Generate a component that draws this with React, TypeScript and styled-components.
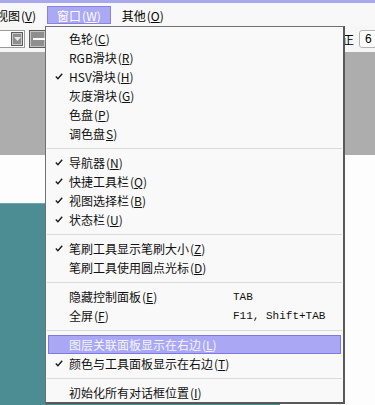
import styled, { createGlobalStyle } from "styled-components";

const GlobalStyle = createGlobalStyle`
  html, body {
    margin: 0;
    padding: 0;
    background: #ffffff;
    overflow: hidden;
  }
  body {
    font-family: "Noto Sans CJK SC", "Liberation Sans", sans-serif;
    font-size: 12px;
    color: #000;
  }
`;

type MenuItem = {
  text: string;
  mn: string;
  open?: string;
  checked?: boolean;
  hot?: boolean;
  shortcut?: string;
};

const sections: MenuItem[][] = [
  [
    { text: "色轮", mn: "C" },
    { text: "RGB滑块", mn: "R" },
    { text: "HSV滑块", mn: "H", checked: true },
    { text: "灰度滑块", mn: "G" },
    { text: "色盘", mn: "P" },
    { text: "调色盘", mn: "S", open: "" },
  ],
  [
    { text: "导航器", mn: "N", checked: true },
    { text: "快捷工具栏", mn: "Q", checked: true },
    { text: "视图选择栏", mn: "B", checked: true },
    { text: "状态栏", mn: "U", checked: true },
  ],
  [
    { text: "笔刷工具显示笔刷大小", mn: "Z", checked: true },
    { text: "笔刷工具使用圆点光标", mn: "D" },
  ],
  [
    { text: "隐藏控制面板", mn: "E", shortcut: "TAB" },
    { text: "全屏", mn: "F", shortcut: "F11, Shift+TAB" },
  ],
  [
    { text: "图层关联面板显示在右边", mn: "L", hot: true },
    { text: "颜色与工具面板显示在右边", mn: "T", checked: true },
  ],
  [{ text: "初始化所有对话框位置", mn: "I" }],
];

export default function App() {
  return (
    <>
      <GlobalStyle />
      <Window>
        <TitleStrip />
        <MenuBar>
          <MenuTitle>
            视图<Paren>(<Mn>V</Mn>)</Paren>
          </MenuTitle>
          <MenuTitle $active>
            窗口<Paren>(<Mn>W</Mn>)</Paren>
          </MenuTitle>
          <MenuTitle>
            其他<Paren>(<Mn>O</Mn>)</Paren>
          </MenuTitle>
        </MenuBar>
        <Toolbar>
          <ToolGroup>
            <ComboField>
              <DropButton>
                <svg width="7" height="4" viewBox="0 0 7 4">
                  <path d="M0 0 H7 L3.5 4 Z" fill="#e8e8e8" />
                </svg>
              </DropButton>
            </ComboField>
            <ToolButton>
              <MinusBar />
            </ToolButton>
          </ToolGroup>
          <ToolGroup $right>
            <ToolLabel>修正</ToolLabel>
            <NumberField>6</NumberField>
          </ToolGroup>
        </Toolbar>
        <Workspace>
          <GrayBand />
          <WhiteBand />
          <CanvasRow>
            <Canvas />
          </CanvasRow>
        </Workspace>

        <Dropdown>
          {sections.map((items, si) => (
            <Section key={si}>
              {si > 0 && (
                <Separator>
                  <SepLine />
                </Separator>
              )}
              {items.map((it) => (
                <Item key={it.text} $hot={it.hot}>
                  <CheckCell>
                    {it.checked && (
                      <svg width="8" height="7" viewBox="0 0 8 7">
                        <path
                          d="M0.8 3.6 L2.9 5.7 L7.2 0.8"
                          fill="none"
                          stroke="#1a1a1a"
                          strokeWidth="1.4"
                        />
                      </svg>
                    )}
                  </CheckCell>
                  <Label>
                    {it.text}
                    <Paren>
                      {it.open ?? "("}
                      <Mn>{it.mn}</Mn>)
                    </Paren>
                  </Label>
                  <Shortcut>{it.shortcut}</Shortcut>
                </Item>
              ))}
            </Section>
          ))}
        </Dropdown>
      </Window>
    </>
  );
}

const Window = styled.div`
  position: relative;
  width: 375px;
  height: 405px;
  overflow: hidden;
  display: flex;
  flex-direction: column;
  background: #ffffff;
`;

const TitleStrip = styled.div`
  flex: none;
  height: 3px;
  background: #a9a8ef;
`;

const MenuBar = styled.div`
  flex: none;
  height: 23px;
  box-sizing: border-box;
  padding-top: 3px;
  margin-left: -14px;
  display: flex;
  align-items: flex-start;
  gap: 1px;
  background: #f8f8f8;
`;

const MenuTitle = styled.div<{ $active?: boolean }>`
  height: 18px;
  box-sizing: border-box;
  padding: 0 9px;
  display: flex;
  align-items: center;
  white-space: nowrap;
  border: 1px solid ${(p) => (p.$active ? "#8683e4" : "transparent")};
  background: ${(p) => (p.$active ? "#aba9f3" : "transparent")};
  color: ${(p) => (p.$active ? "#ffffff" : "#000000")};
`;

const Paren = styled.span`
  margin-left: 1px;
`;

const Mn = styled.span`
  text-decoration: underline;
  text-underline-offset: 1px;
`;

const Toolbar = styled.div`
  flex: none;
  height: 26px;
  display: flex;
  align-items: center;
  justify-content: space-between;
  background: #f6f6f6;
  overflow: hidden;
`;

const ToolGroup = styled.div<{ $right?: boolean }>`
  display: flex;
  align-items: center;
  gap: ${(p) => (p.$right ? "5px" : "4px")};
  margin-right: ${(p) => (p.$right ? "-24px" : "0")};
`;

const ComboField = styled.div`
  width: 40px;
  height: 18px;
  margin-left: -15px;
  box-sizing: border-box;
  border: 1px solid #9a9a9a;
  background: #ffffff;
  display: flex;
  justify-content: flex-end;
  align-items: center;
  padding-right: 1px;
`;

const DropButton = styled.div`
  width: 12px;
  height: 14px;
  box-sizing: border-box;
  border: 1px solid #5c5c5c;
  box-shadow: inset 0 0 0 1px #c9c9c9;
  background: #8e8e8e;
  display: flex;
  align-items: center;
  justify-content: center;
`;

const ToolButton = styled.div`
  width: 17px;
  height: 18px;
  box-sizing: border-box;
  border: 1px solid #5c5c5c;
  box-shadow: inset 0 0 0 1px #c4c4c4;
  background: #8e8e8e;
  display: flex;
  align-items: center;
  justify-content: flex-end;
`;

const MinusBar = styled.div`
  width: 12px;
  height: 2px;
  background: #ffffff;
`;

const ToolLabel = styled.span`
  white-space: nowrap;
`;

const NumberField = styled.div`
  width: 40px;
  height: 18px;
  box-sizing: border-box;
  border: 1px solid #b4b4b4;
  border-radius: 3px;
  background: #ffffff;
  padding-left: 5px;
  display: flex;
  align-items: center;
  font-family: "Liberation Sans", sans-serif;
  font-size: 12px;
`;

const Workspace = styled.div`
  flex: 1;
  display: flex;
  flex-direction: column;
`;

const GrayBand = styled.div`
  flex: none;
  height: 103px;
  background: #adadad;
`;

const WhiteBand = styled.div`
  flex: none;
  height: 48px;
  background: #fdfdfd;
`;

const CanvasRow = styled.div`
  flex: 1;
  display: flex;
  background: #fdfdfd;
`;

const Canvas = styled.div`
  width: 280px;
  background: #4b8d93;
  border-top: 1px solid #6fa7ac;
`;

const Dropdown = styled.div`
  position: absolute;
  left: 45px;
  top: 26px;
  width: 300px;
  box-sizing: border-box;
  padding-top: 2px;
  background: #f9f9f9;
  border-left: 1px solid #707070;
  border-top: 1px solid #707070;
  border-right: 2px solid #595959;
  border-bottom: 2px solid #595959;
  display: flex;
  flex-direction: column;
`;

const Section = styled.div`
  display: flex;
  flex-direction: column;
`;

const Separator = styled.div`
  height: 10px;
  display: flex;
  align-items: center;
`;

const SepLine = styled.div`
  flex: 1;
  height: 1px;
  margin: 0 1px;
  background: #d9d9d9;
`;

const Item = styled.div<{ $hot?: boolean }>`
  height: 19px;
  margin: 0 2px;
  box-sizing: border-box;
  display: grid;
  grid-template-columns: 20px 164px 1fr;
  align-items: center;
  border: 1px solid ${(p) => (p.$hot ? "#7d79e2" : "transparent")};
  background: ${(p) => (p.$hot ? "#aaa8f5" : "transparent")};
  color: ${(p) => (p.$hot ? "#f4f4ff" : "#111111")};
`;

const CheckCell = styled.div`
  display: flex;
  align-items: center;
  padding-left: 6px;
`;

const Label = styled.span`
  white-space: nowrap;
`;

const Shortcut = styled.span`
  white-space: nowrap;
  font-family: "Liberation Mono", monospace;
  font-size: 11px;
`;
